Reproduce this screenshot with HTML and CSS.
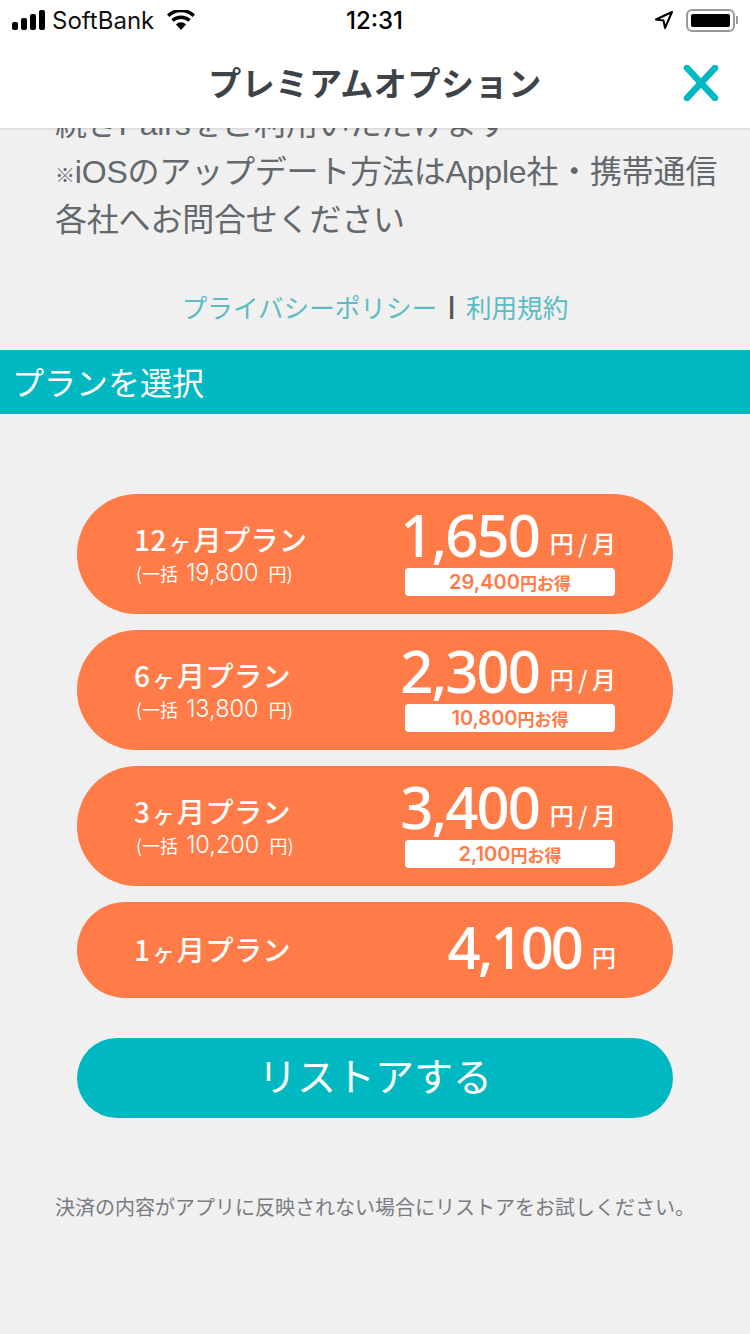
FILE: index.html
```html
<!DOCTYPE html>
<html lang="ja">
<head>
    <meta charset="UTF-8">
    <meta name="viewport" content="width=device-width, initial-scale=1.0">
    <title>プレミアムオプション</title>
    <link rel="stylesheet" href="styles.css">
</head>
<body>
    <div class="screen">
        <div class="header">
            <div class="statusBar">
                <div class="statusLeft">
                    <svg class="signal" width="34" height="20" viewBox="0 0 34 20">
                        <rect x="0" y="12" width="6" height="8" rx="2"/>
                        <rect x="9" y="8" width="6" height="12" rx="2"/>
                        <rect x="18" y="4" width="6" height="16" rx="2"/>
                        <rect x="27" y="0" width="6" height="20" rx="2"/>
                    </svg>
                    <span class="carrier">SoftBank</span>
                    <svg class="wifi" width="30" height="20" viewBox="0 0 30 20">
                        <path d="M15 20l-5-5.6a7 7 0 0 1 10 0z"/>
                        <path d="M7.6 11.800a11 11 0 0 1 14.800 0l2.300-2.600a14.500 14.500 0 0 0-19.400 0z"/>
                        <path d="M3.300 7a17 17 0 0 1 23.400 0l2.300-2.600a20.500 20.500 0 0 0-28 0z"/>
                    </svg>
                </div>
                <div class="clock">12:31</div>
                <div class="statusRight">
                    <svg class="arrow" width="20" height="20" viewBox="0 0 20 20">
                        <path d="M18 2L2 9.500l7.500 1 1.500 7.500z" fill="none" stroke="#000" stroke-width="2" stroke-linejoin="round"/>
                    </svg>
                    <div class="battery"><div class="batteryFill"></div></div>
                    <div class="batteryTip"></div>
                </div>
            </div>
            <div class="navBar">
                <h1>プレミアムオプション</h1>
                <svg class="closeIcon" width="36" height="36" viewBox="0 0 36 36">
                    <path d="M4 3L32 33M32 3L4 33" fill="none" stroke="#00b8c2" stroke-width="6.500" stroke-linecap="round"/>
                </svg>
            </div>
        </div>

        <div class="content">
            <p class="notice">続きPairsをご利用いただけます<br><span class="mark">※</span>iOSのアップデート方法はApple社・携帯通信各社へお問合せください</p>
            <div class="links">
                <a class="link">プライバシーポリシー</a>
                <span class="linkSep">|</span>
                <a class="link">利用規約</a>
            </div>
            <div class="sectionBand">プランを選択</div>

            <div class="plans">
                <div class="plan">
                    <div class="planName">
                        <div class="planTitle">12<span class="ke">ヶ</span>月プラン</div>
                        <div class="planTotal">(一括 <span class="totalNum">19,800</span> 円)</div>
                    </div>
                    <div class="planPrice">
                        <div class="priceRow"><span class="amount">1,650</span><span class="unit">円 / 月</span></div>
                        <div class="saving"><b>29,400</b><small>円お得</small></div>
                    </div>
                </div>
                <div class="plan">
                    <div class="planName">
                        <div class="planTitle">6<span class="ke">ヶ</span>月プラン</div>
                        <div class="planTotal">(一括 <span class="totalNum">13,800</span> 円)</div>
                    </div>
                    <div class="planPrice">
                        <div class="priceRow"><span class="amount">2,300</span><span class="unit">円 / 月</span></div>
                        <div class="saving"><b>10,800</b><small>円お得</small></div>
                    </div>
                </div>
                <div class="plan">
                    <div class="planName">
                        <div class="planTitle">3<span class="ke">ヶ</span>月プラン</div>
                        <div class="planTotal">(一括 <span class="totalNum">10,200</span> 円)</div>
                    </div>
                    <div class="planPrice">
                        <div class="priceRow"><span class="amount">3,400</span><span class="unit">円 / 月</span></div>
                        <div class="saving"><b>2,100</b><small>円お得</small></div>
                    </div>
                </div>
                <div class="plan planShort">
                    <div class="planName">
                        <div class="planTitle">1<span class="ke">ヶ</span>月プラン</div>
                    </div>
                    <div class="planPrice">
                        <div class="priceRow"><span class="amount">4,100</span><span class="unit">円</span></div>
                    </div>
                </div>
            </div>

            <button type="button" class="restore">リストアする</button>
            <p class="footNote">決済の内容がアプリに反映されない場合にリストアをお試しください。</p>
        </div>
    </div>
</body>
</html>
```

FILE: styles.css
```css
* {
    box-sizing: border-box;
}
body {
    margin: 0;
    padding: 0;
    background-color: #f0f0f0;
    font-family: "Noto Sans CJK JP", "Noto Sans", sans-serif;
}
.screen {
    width: 750px;
    height: 1334px;
    overflow: hidden;
}
.header {
    position: relative;
    z-index: 2;
    height: 128px;
    background-color: #fff;
    box-shadow: 0 1px 2px rgba(0, 0, 0, 0.12);
}
.statusBar {
    height: 40px;
    padding: 0 12px;
    display: flex;
    align-items: center;
    justify-content: space-between;
    position: relative;
}
.statusLeft,
.statusRight {
    display: flex;
    align-items: center;
}
.carrier {
    margin-left: 6px;
    font-family: Inter, "Liberation Sans", sans-serif;
    font-size: 24px;
    color: #111;
}
.wifi {
    margin-left: 12px;
}
.clock {
    position: absolute;
    left: 346px;
    top: 6px;
    font-family: Inter, "Liberation Sans", sans-serif;
    font-size: 24px;
    font-weight: 500;
    color: #000;
}
.arrow {
    margin-right: 12px;
}
.battery {
    width: 49px;
    height: 23px;
    padding: 3px;
    border: 2px solid #999;
    border-radius: 6px;
}
.batteryFill {
    width: 39px;
    height: 13px;
    background-color: #000;
    border-radius: 2px;
}
.batteryTip {
    width: 2px;
    height: 8px;
    margin-left: 1px;
    background-color: #999;
}
.navBar {
    height: 88px;
    position: relative;
    display: flex;
    align-items: center;
    justify-content: center;
    padding-bottom: 5px;
}
h1 {
    margin: 0;
    font-size: 33px;
    font-weight: 700;
    color: #3e4347;
    letter-spacing: 0.6px;
}
.closeIcon {
    position: absolute;
    right: 31px;
    top: 25px;
}
.notice {
    margin: -28px 28px 0 55px;
    font-family: "Liberation Sans", "Noto Sans CJK JP", sans-serif;
    font-size: 32px;
    line-height: 48px;
    letter-spacing: -0.2px;
    color: #63686c;
}
.mark {
    font-size: 20px;
    line-height: 1;
}
.links {
    margin-top: 38px;
    height: 48px;
    display: flex;
    align-items: center;
    justify-content: center;
    gap: 11px;
    font-size: 25.600px;
}
.link {
    color: #5cbcc2;
}
.linkSep {
    color: #555;
    font-family: "Liberation Sans", sans-serif;
    font-size: 24px;
    font-weight: 700;
}
.sectionBand {
    height: 64px;
    margin-top: 20px;
    padding-left: 12px;
    background-color: #00b8c2;
    color: #fff;
    font-size: 32px;
    line-height: 62px;
}
.plans {
    margin: 80px 77px 0;
    display: flex;
    flex-direction: column;
    gap: 16px;
}
.plan {
    height: 120px;
    padding: 0 57px;
    border-radius: 60px;
    background-color: #ff7b47;
    color: #fff;
    display: flex;
    align-items: center;
    justify-content: space-between;
}
.planShort {
    height: 96px;
    border-radius: 48px;
}
.planTitle {
    font-size: 28px;
    font-weight: 500;
    line-height: 36px;
    letter-spacing: 0.5px;
}
.ke {
    margin: 0 2px;
    font-size: 22px;
}
.planTotal {
    margin-top: 0;
    margin-left: 2px;
    font-size: 18px;
    line-height: 28px;
    white-space: pre;
}
.totalNum {
    font-family: Inter, "Liberation Sans", sans-serif;
    font-size: 23.500px;
    font-weight: 300;
    line-height: 1;
    margin: 0 6px 0 4px;
}
.planPrice {
    width: 212px;
    display: flex;
    flex-direction: column;
    align-items: flex-end;
}
.priceRow {
    display: flex;
    align-items: baseline;
    height: 56px;
    line-height: 46px;
    white-space: nowrap;
}
.planShort .priceRow {
    margin-top: 4px;
}
.amount {
    font-family: "Noto Sans", sans-serif;
    font-size: 58px;
    font-weight: 500;
    letter-spacing: -2px;
}
.planShort .amount {
    letter-spacing: -3px;
}
.unit {
    align-self: flex-start;
    margin-top: 8px;
    margin-left: 11px;
    font-size: 24px;
    font-weight: 500;
    word-spacing: -1px;
    white-space: pre;
}
.planShort .unit {
    margin-top: 10px;
}
.saving {
    width: 210px;
    height: 28px;
    margin-right: 1px;
    border-radius: 4px;
    background-color: #fff;
    color: #ff7b47;
    display: flex;
    align-items: center;
    justify-content: center;
}
.saving b {
    font-family: Inter, "Noto Sans", sans-serif;
    font-size: 20px;
    font-weight: 600;
}
.saving small {
    font-size: 17px;
    font-weight: 700;
}
.restore {
    display: block;
    width: 596px;
    height: 80px;
    margin: 40px 77px 0;
    padding: 0 0 9px;
    border: none;
    border-radius: 40px;
    background-color: #00b8c2;
    color: #fff;
    font-family: inherit;
    font-size: 39px;
}
.footNote {
    margin: 74px 0 0 55px;
    font-size: 20px;
    line-height: 30px;
    color: #787c80;
}
```
